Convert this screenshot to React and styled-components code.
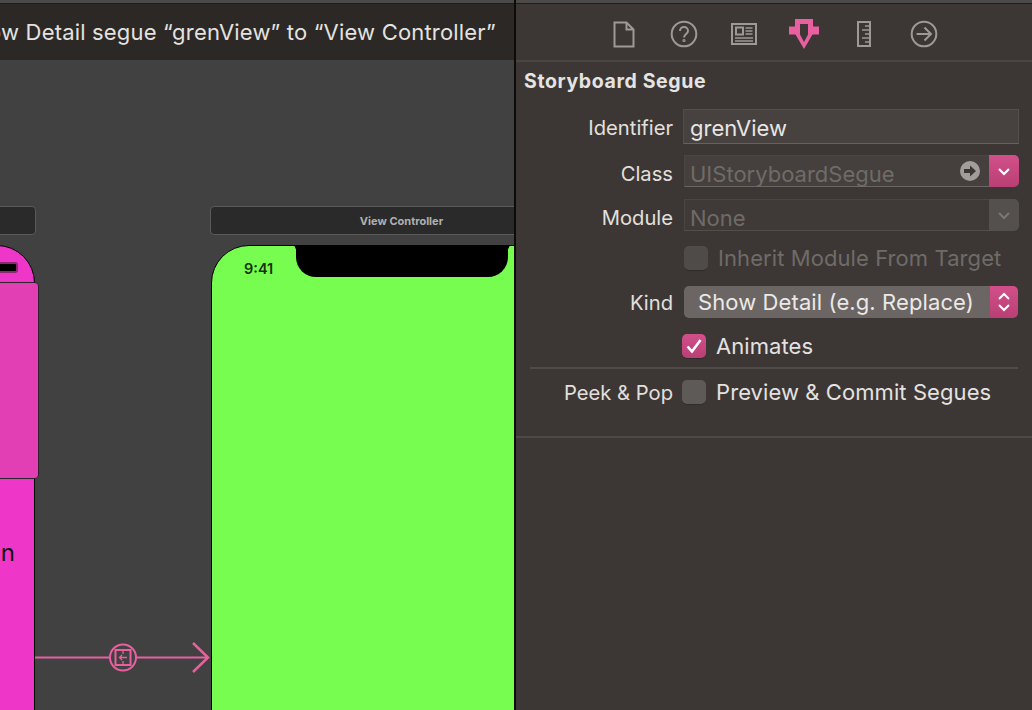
import React from "react";
import styled, { createGlobalStyle } from "styled-components";

const Global = createGlobalStyle`
  html, body { margin: 0; padding: 0; height: 100%; background: #3c3735; overflow: hidden; }
  #root { height: 100%; }
  * { box-sizing: border-box; }
`;

const font = `Inter, "Liberation Sans", sans-serif`;

const Window = styled.div`
  display: flex;
  width: 1032px;
  height: 710px;
  overflow: hidden;
  font-family: ${font};
`;

const Editor = styled.section`
  display: flex;
  flex-direction: column;
  width: 514px;
  flex: none;
  background: #414141;
  overflow: hidden;
`;

const TopStrip = styled.div`
  height: 4px;
  flex: none;
  background: #4b4a49;
  border-bottom: 1px solid #1f1c1a;
`;

const Breadcrumb = styled.header`
  height: 56px;
  flex: none;
  background: #2c2825;
  display: flex;
  align-items: center;
  justify-content: flex-end;
  padding: 0 18px 0 0;
  color: #e4e2e0;
  font-size: 22px;
  letter-spacing: 0.18px;
  white-space: nowrap;
  overflow: hidden;
`;

const Canvas = styled.div`
  position: relative;
  flex: 1;
  overflow: hidden;
`;

const SceneLabel = styled.div`
  position: absolute;
  top: 146px;
  left: ${(p) => p.$left}px;
  width: ${(p) => p.$width}px;
  height: 29px;
  background: #2a2a2a;
  border: 1px solid #5a5a5a;
  border-radius: 4px;
  color: #b0b0b0;
  font-size: 11px;
  font-weight: 700;
  display: flex;
  align-items: center;
  justify-content: center;
`;

const Phone = styled.div`
  position: absolute;
  top: 185px;
  left: ${(p) => p.$left}px;
  width: ${(p) => p.$width}px;
  height: 600px;
  background: ${(p) => p.$color};
  border: 1.5px solid #000;
  border-radius: 38px;
  overflow: hidden;
`;

const Notch = styled.div`
  position: absolute;
  top: -2px;
  left: 84px;
  width: 212px;
  height: 33px;
  background: #000;
  border-radius: 0 0 20px 20px;

  &::before,
  &::after {
    content: "";
    position: absolute;
    top: 0;
    width: 6px;
    height: 6px;
  }
  &::before {
    left: -6px;
    background: radial-gradient(circle at 0 100%, transparent 5.5px, #000 6px);
  }
  &::after {
    right: -6px;
    background: radial-gradient(circle at 100% 100%, transparent 5.5px, #000 6px);
  }
`;

const StatusTime = styled.span`
  position: absolute;
  top: 14px;
  left: 32px;
  font-size: 14.5px;
  font-weight: 600;
  color: #16300c;
`;

const Speaker = styled.div`
  position: absolute;
  top: 16px;
  right: 16px;
  width: 30px;
  height: 11px;
  background: #000;
  border: 2px solid #8a2a72;
  border-radius: 3px;
`;

const NavOverlay = styled.div`
  position: absolute;
  top: 222px;
  left: -10px;
  width: 49px;
  height: 197px;
  background: #e33fb4;
  border: 1.5px solid #2e222b;
  border-radius: 4px;
`;

const CutText = styled.span`
  position: absolute;
  top: 292px;
  right: 19px;
  font-size: 24px;
  color: #111;
  line-height: 30px;
`;

const SegueArrow = styled.svg`
  position: absolute;
  left: 34px;
  top: 581px;
`;

const Divider = styled.div`
  width: 2px;
  flex: none;
  background: #0c0b0a;
`;

const Inspector = styled.aside`
  flex: 1;
  display: flex;
  flex-direction: column;
  background: #3c3735;
`;

const TabBar = styled.nav`
  height: 62px;
  flex: none;
  padding-top: 5px;
  display: flex;
  align-items: center;
  justify-content: center;
  background: #3c3735;
  border-top: 3px solid #4b4a49;
  border-bottom: 2px solid #4a4643;
  box-shadow: inset 0 1px 0 #1f1c1a;
`;

const Tab = styled.div`
  width: 60px;
  height: 32px;
  display: flex;
  align-items: center;
  justify-content: center;
`;

const Title = styled.h2`
  margin: 7px 0 0 8px;
  height: 24px;
  line-height: 24px;
  font-size: 19.5px;
  font-weight: 700;
  color: #e6e4e2;
  letter-spacing: 0.62px;
`;

const Form = styled.div`
  display: flex;
  flex-direction: column;
  padding-top: 21px;
  border-bottom: 2px solid #4d4946;
  height: 350px;
  flex: none;
  margin-top: -5px;
`;

const Row = styled.div`
  display: flex;
  align-items: center;
  height: ${(p) => p.$h}px;
  margin-top: ${(p) => p.$mt || 0}px;
`;

const Label = styled.label`
  width: 157px;
  flex: none;
  text-align: right;
  font-size: 20.2px;
  color: #e2e0de;
  padding-top: ${(p) => p.$drop || 0}px;
  margin-right: ${(p) => p.$gap ?? 11}px;
`;

const TextField = styled.div`
  width: 336px;
  height: 35px;
  margin-left: -1px;
  padding: 2px 6px 0;
  display: flex;
  align-items: center;
  background: #47423f;
  border: 1px solid #534f4c;
  border-bottom-color: #66625f;
  font-size: 22px;
  color: #e8e6e4;
`;

const Combo = styled.div`
  display: flex;
  width: 335px;
  height: 32px;
`;

const ComboField = styled.div`
  position: relative;
  flex: 1;
  padding: 5px 4px 0 5px;
  display: flex;
  align-items: center;
  background: ${(p) => (p.$dim ? "#3f3a38" : "#45403d")};
  border-top: 1px solid #4a4643;
  border-bottom: 1px solid ${(p) => (p.$dim ? "#524e4b" : "#6a6663")};
  border-left: 1px solid #4a4643;
  font-size: 22px;
  color: #6f6b68;
`;

const Jump = styled.svg`
  position: absolute;
  right: 9px;
  top: 5px;
`;

const ComboButton = styled.div`
  width: 30px;
  flex: none;
  display: flex;
  align-items: center;
  justify-content: center;
  border-radius: 0 5px 5px 0;
  background: ${(p) => (p.$dim ? "#54504d" : "linear-gradient(#d2508a, #b93f74)")};
`;

const Popup = styled.div`
  display: flex;
  width: 334px;
  height: 32px;
  border-radius: 5px;
  overflow: hidden;
`;

const PopupValue = styled.div`
  flex: 1;
  padding-left: 14px;
  display: flex;
  align-items: center;
  background: #6b6663;
  font-size: 22px;
  letter-spacing: 0.1px;
  color: #ebe9e7;
  white-space: nowrap;
`;

const PopupStepper = styled.div`
  width: 28px;
  flex: none;
  display: flex;
  align-items: center;
  justify-content: center;
  background: linear-gradient(#d2508a, #b93f74);
`;

const Check = styled.span`
  width: 24px;
  height: 24px;
  flex: none;
  border-radius: 5px;
  display: flex;
  align-items: center;
  justify-content: center;
  background: ${(p) =>
    p.$on ? "linear-gradient(#d2508a, #b93f74)" : p.$dim ? "#4f4b48" : "#5e5a57"};
  box-shadow: 0 1px 0 rgba(0, 0, 0, 0.2);
`;

const CheckText = styled.span`
  margin-left: 10px;
  font-size: 22px;
  letter-spacing: 0.08px;
  color: ${(p) => (p.$dim ? "#6f6b68" : "#e4e2e0")};
  white-space: nowrap;
`;

const Indent = styled.div`
  width: ${(p) => p.$w}px;
  flex: none;
`;

const Separator = styled.div`
  height: 2px;
  margin: 9px 14px 0 14px;
  background: #4f4b48;
`;

const stroke = { fill: "none", stroke: "#9c9997", strokeWidth: 2 };

const Chevron = ({ color = "#fff" }) => (
  <svg width="14" height="9" viewBox="0 0 14 9">
    <path d="M2 2l5 5 5-5" fill="none" stroke={color} strokeWidth="2.2" />
  </svg>
);

const Stepper = () => (
  <svg width="14" height="24" viewBox="0 0 14 24" fill="none" stroke="#fff" strokeWidth="2">
    <path d="M2 9l5-5 5 5M2 15l5 5 5-5" />
  </svg>
);

export default function App() {
  return (
    <Window>
      <Global />
      <Editor>
        <TopStrip />
        <Breadcrumb>ow Detail segue “grenView” to “View Controller”</Breadcrumb>
        <Canvas>
          <SceneLabel $left={-100} $width={136} />
          <SceneLabel $left={210} $width={383}>View Controller</SceneLabel>
          <Phone $left={-200} $width={235} $color="#ee37c8">
            <Speaker />
            <CutText>n</CutText>
          </Phone>
          <NavOverlay />
          <Phone $left={211} $width={382} $color="#76fd4f">
            <Notch />
            <StatusTime>9:41</StatusTime>
          </Phone>
          <SegueArrow width="180" height="32" viewBox="0 0 180 32">
            <g fill="none" stroke="#e8609f" strokeWidth="2">
              <path d="M1 16.5H76M102 16.5H173" />
              <circle cx="89" cy="16.5" r="13" />
              <rect x="81.5" y="9" width="15" height="15" />
              <path d="M89 9v4M89 20v4M93 16.5h-7M88 14l-2.5 2.5 2.5 2.5" strokeWidth="1.3" />
              <path d="M159 2l15 14.5-15 14.5" strokeWidth="2.5" />
            </g>
          </SegueArrow>
        </Canvas>
      </Editor>
      <Divider />
      <Inspector>
        <TabBar>
          <Tab>
            <svg width="22" height="27" viewBox="0 0 22 27" {...stroke}>
              <path d="M1.5 1.5h12l7 7v17h-19zM13.5 1.5v7h7" />
            </svg>
          </Tab>
          <Tab>
            <svg width="28" height="28" viewBox="0 0 28 28" {...stroke}>
              <circle cx="14" cy="14" r="12.3" />
              <path d="M10 11c0-5.500 8-5.500 8 0 0 3-4 3-4 6.500" />
              <circle cx="14" cy="20.500" r="0.6" />
            </svg>
          </Tab>
          <Tab>
            <svg width="26" height="22" viewBox="0 0 26 22" {...stroke}>
              <rect x="1" y="1" width="24" height="20" />
              <rect x="5" y="4.500" width="7" height="7" />
              <path d="M14.500 5h7M14.500 8h7M14.500 11h7M4 15h18M4 18h18" strokeWidth="1.500" />
            </svg>
          </Tab>
          <Tab>
            <svg width="30" height="30" viewBox="0 0 30 30">
              <path
                d="M6 0h18v7.500h6v8h-6.500L15 30 6.500 15.500H0v-8h6zM11 5v10.500l4 7.500 4-7.500V5z"
                fill="#e95f9f"
                fillRule="evenodd"
              />
            </svg>
          </Tab>
          <Tab>
            <svg width="14" height="26" viewBox="0 0 14 26" {...stroke}>
              <rect x="1" y="1" width="12" height="24" />
              <path d="M13 5H8M13 9H5M13 13H8M13 17H5M13 21H8" strokeWidth="1.500" />
            </svg>
          </Tab>
          <Tab>
            <svg width="28" height="28" viewBox="0 0 28 28" {...stroke}>
              <circle cx="14" cy="14" r="12.3" />
              <path d="M6.500 14h14M14.500 7.500l6.500 6.500-6.500 6.500" />
            </svg>
          </Tab>
        </TabBar>
        <Title>Storyboard Segue</Title>
        <Form>
          <Row $h={35}>
            <Label $drop={2}>Identifier</Label>
            <TextField>grenView</TextField>
          </Row>
          <Row $h={32} $mt={11}>
            <Label $drop={4}>Class</Label>
            <Combo>
              <ComboField>
                UIStoryboardSegue
                <Jump width="20" height="20" viewBox="0 0 20 20">
                  <circle cx="10" cy="10" r="10" fill="#a09d9b" />
                  <path d="M4 8h6V4.500l6 5.500-6 5.500V12H4z" fill="#3c3735" />
                </Jump>
              </ComboField>
              <ComboButton><Chevron /></ComboButton>
            </Combo>
          </Row>
          <Row $h={32} $mt={12}>
            <Label $drop={4}>Module</Label>
            <Combo>
              <ComboField $dim>None</ComboField>
              <ComboButton $dim><Chevron color="#7a7673" /></ComboButton>
            </Combo>
          </Row>
          <Row $h={24} $mt={15}>
            <Indent $w={168} />
            <Check $dim />
            <CheckText $dim>Inherit Module From Target</CheckText>
          </Row>
          <Row $h={32} $mt={16}>
            <Label>Kind</Label>
            <Popup>
              <PopupValue>Show Detail (e.g. Replace)</PopupValue>
              <PopupStepper><Stepper /></PopupStepper>
            </Popup>
          </Row>
          <Row $h={24} $mt={16}>
            <Indent $w={166} />
            <Check $on>
              <svg width="18" height="16" viewBox="0 0 18 16">
                <path d="M2.500 8.500l4.500 5L15.500 2" fill="none" stroke="#fff" strokeWidth="2.600" />
              </svg>
            </Check>
            <CheckText>Animates</CheckText>
          </Row>
          <Separator />
          <Row $h={24} $mt={11}>
            <Label $gap={9}>Peek &amp; Pop</Label>
            <Check />
            <CheckText>Preview &amp; Commit Segues</CheckText>
          </Row>
        </Form>
      </Inspector>
    </Window>
  );
}
